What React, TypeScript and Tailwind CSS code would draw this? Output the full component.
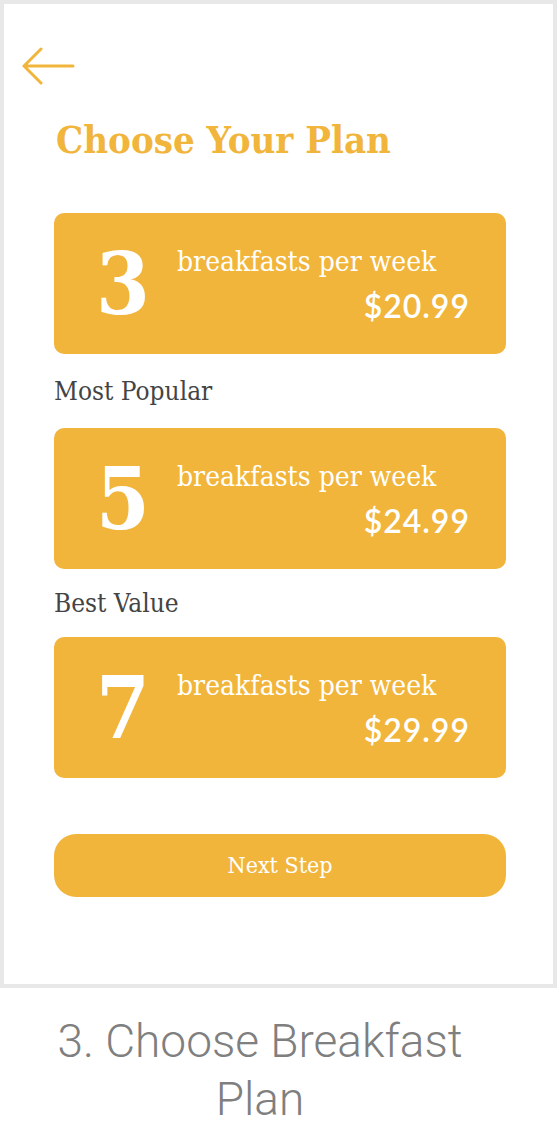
import React from "react";

interface PlanProps {
  count: string;
  price: string;
}

const slab = { fontFamily: "'DejaVu Serif', 'Liberation Serif', serif" };

const PlanCard: React.FC<PlanProps> = ({ count, price }) => {
  return (
    <div className="flex h-[141px] items-center rounded-[10px] bg-[#f1b53c] pl-[40px] pr-[36px] text-white">
      <div
        className="w-[58px] text-center text-[86px] font-semibold leading-none font-stretch-condensed"
        style={slab}
      >
        {count}
      </div>
      <div className="ml-[25px] flex flex-1 flex-col">
        <div
          className="mt-[2px] text-[28px] leading-[32px] font-light font-stretch-condensed"
          style={slab}
        >
          breakfasts per week
        </div>
        <div className="mt-[10px] self-end text-[32px] font-semibold leading-[36px] font-['Lato',sans-serif] tracking-[1px]">
          {price}
        </div>
      </div>
    </div>
  );
};

const Label: React.FC<{ text: string; h: string }> = ({ text, h }) => (
  <div
    className={`flex items-center text-[26px] text-[#444] font-stretch-condensed ${h}`}
    style={slab}
  >
    {text}
  </div>
);

export default function App() {
  return (
    <div className="w-[557px] bg-white">
      <div className="h-[988px] border-4 border-[#e8e8e8] bg-white">
        <div className="pl-[18px] pt-[42px]">
          <svg width="56" height="40" viewBox="0 0 56 40" fill="none">
            <path
              d="M2 20 H51 M19 3 L2 20 L19 37"
              stroke="#f1b53c"
              strokeWidth="3"
              strokeLinecap="round"
              strokeLinejoin="round"
            />
          </svg>
        </div>
        <div className="px-[50px] pr-[47px]">
          <h1
            className="mt-[32px] ml-[2px] text-[38px] font-bold leading-[44px] text-[#f1b53c] font-stretch-condensed"
            style={slab}
          >
            Choose Your Plan
          </h1>
          <div className="mt-[51px]">
            <PlanCard count="3" price="$20.99" />
            <Label text="Most Popular" h="h-[74px]" />
            <PlanCard count="5" price="$24.99" />
            <Label text="Best Value" h="h-[68px] pt-[1px]" />
            <PlanCard count="7" price="$29.99" />
          </div>
          <button
            className="mt-[56px] flex h-[63px] w-full items-center justify-center rounded-[22px] bg-[#f1b53c] text-[23px] font-normal text-white font-stretch-condensed"
            style={slab}
          >
            Next Step
          </button>
        </div>
      </div>
      <div className="w-[520px] pt-[24px] text-center text-[46px] font-light leading-[58px] text-[#7f7f7f] font-['Roboto',sans-serif]">
        3. Choose Breakfast
        <br />
        Plan
      </div>
    </div>
  );
}
